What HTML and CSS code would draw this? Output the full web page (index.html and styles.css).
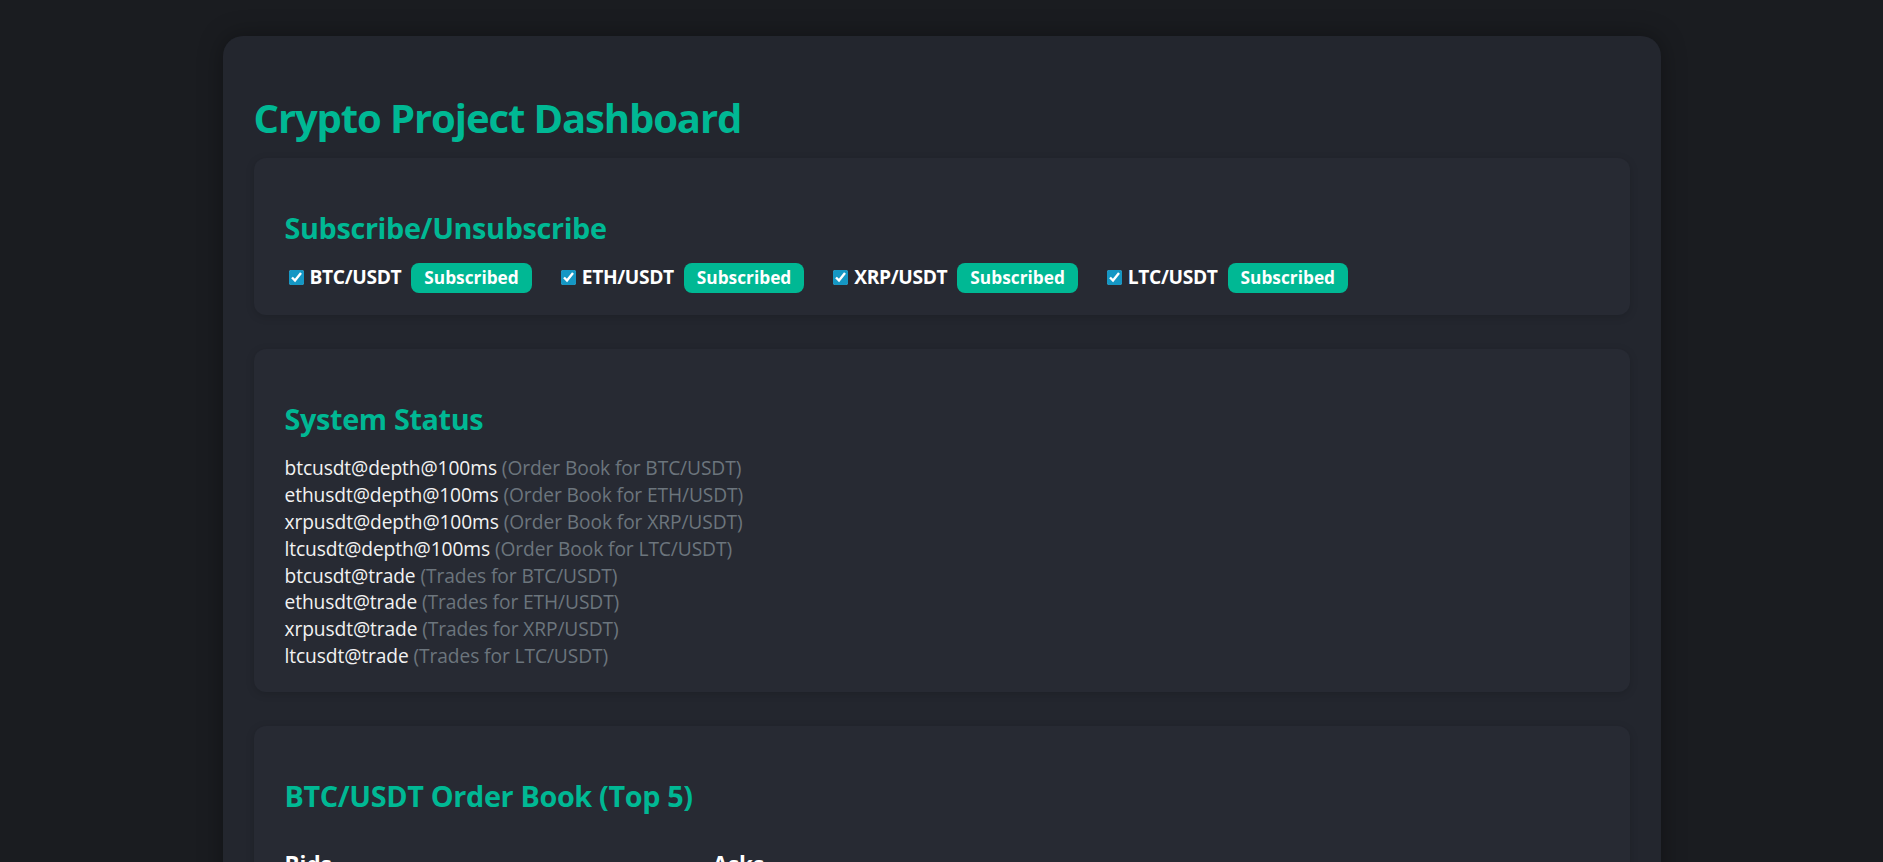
FILE: index.html
```html
<!DOCTYPE html>
<html lang="en">
<head>
<meta charset="utf-8">
<title>Crypto Project Dashboard</title>
<link rel="stylesheet" href="styles.css">
</head>
<body>
<div class="container">
  <h1 class="title">Crypto Project Dashboard</h1>

  <section class="card">
    <h2 class="card-title">Subscribe/Unsubscribe</h2>
    <div class="sub-row">
      <label class="sub-item"><input type="checkbox" class="sub-check" checked><span class="sub-label">BTC/USDT</span><span class="badge">Subscribed</span></label>
      <label class="sub-item"><input type="checkbox" class="sub-check" checked><span class="sub-label">ETH/USDT</span><span class="badge">Subscribed</span></label>
      <label class="sub-item"><input type="checkbox" class="sub-check" checked><span class="sub-label">XRP/USDT</span><span class="badge">Subscribed</span></label>
      <label class="sub-item"><input type="checkbox" class="sub-check" checked><span class="sub-label">LTC/USDT</span><span class="badge">Subscribed</span></label>
    </div>
  </section>

  <section class="card">
    <h2 class="card-title">System Status</h2>
    <ul class="status-list">
      <li>btcusdt@depth@100ms <span class="muted">(Order Book for BTC/USDT)</span></li>
      <li>ethusdt@depth@100ms <span class="muted">(Order Book for ETH/USDT)</span></li>
      <li>xrpusdt@depth@100ms <span class="muted">(Order Book for XRP/USDT)</span></li>
      <li>ltcusdt@depth@100ms <span class="muted">(Order Book for LTC/USDT)</span></li>
      <li>btcusdt@trade <span class="muted">(Trades for BTC/USDT)</span></li>
      <li>ethusdt@trade <span class="muted">(Trades for ETH/USDT)</span></li>
      <li>xrpusdt@trade <span class="muted">(Trades for XRP/USDT)</span></li>
      <li>ltcusdt@trade <span class="muted">(Trades for LTC/USDT)</span></li>
    </ul>
  </section>

  <section class="card card-book">
    <h2 class="card-title">BTC/USDT Order Book (Top 5)</h2>
    <div class="book">
      <div class="book-col">
        <h3 class="book-title">Bids</h3>
        <div class="book-row">Price / Quantity</div>
      </div>
      <div class="book-col">
        <h3 class="book-title">Asks</h3>
        <div class="book-row">Price / Quantity</div>
      </div>
    </div>
  </section>
</div>
</body>
</html>
```

FILE: styles.css
```css
html, body {
  margin: 0;
  padding: 0;
}

body {
  background: #1a1c20;
  font-family: "Open Sans", "Noto Sans", sans-serif;
  color: #f2f2f2;
  font-size: 19.2px;
}

.container {
  width: 1438px;
  box-sizing: border-box;
  margin: 36px auto 0;
  padding: 30px 31px 40px;
  background: #23262e;
  border-radius: 20px;
  box-shadow: 0 0 24px rgba(0, 0, 0, 0.35);
}

.title {
  margin: 28px 0 16px;
  font-size: 40px;
  line-height: 1.2;
  font-weight: 700;
  letter-spacing: -1.1px;
  color: #00b894;
}

.card {
  background: #272a33;
  border-radius: 12px;
  padding: 28px 31px 22px;
  margin-bottom: 34px;
  box-shadow: 0 2px 8px rgba(0, 0, 0, 0.15);
}

.card-title {
  margin: 25px 0 17px;
  font-size: 28.8px;
  line-height: 1.2;
  font-weight: 700;
  letter-spacing: -0.35px;
  color: #00b894;
}

.sub-row {
  display: flex;
  align-items: center;
  gap: 25px;
}

.sub-item {
  display: flex;
  align-items: center;
}

.sub-check {
  width: 15px;
  height: 15px;
  margin: 0 6px 0 4px;
  accent-color: #1597c4;
}

.sub-label {
  font-weight: 700;
  color: #ffffff;
  line-height: 1.4;
  letter-spacing: -0.35px;
}

.badge {
  margin-left: 10px;
  height: 30px;
  line-height: 30px;
  padding: 0 13px;
  border-radius: 8px;
  background: #00b894;
  color: #ffffff;
  font-weight: 700;
  font-size: 17.3px;
}

.status-list {
  list-style: none;
  margin: 0;
  padding: 2px 0 0;
  line-height: 26.88px;
  letter-spacing: -0.1px;
}

.muted {
  color: #6c757d;
}

.card-book {
  min-height: 400px;
}

.book {
  display: grid;
  grid-template-columns: 428px 1fr;
  margin-top: 38px;
}

.book-title {
  margin: 0 0 12px;
  font-size: 22.4px;
  line-height: 1.2;
  font-weight: 700;
  color: #ffffff;
}

.book-row {
  color: #6c757d;
  line-height: 26.88px;
}
```
